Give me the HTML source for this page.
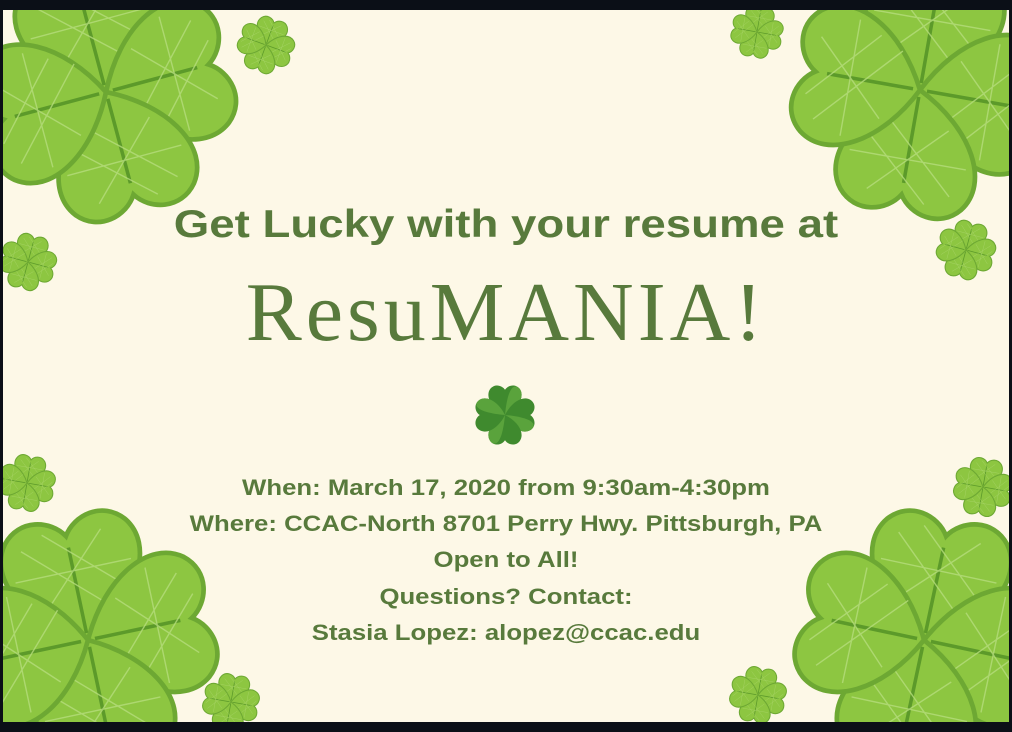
<!DOCTYPE html>
<html><head><style>
html,body{margin:0;padding:0;background:#0b0f17;overflow:hidden;}
#c{position:relative;width:1012px;height:732px;overflow:hidden;background:#0b0f17;}
#p{position:absolute;left:3px;top:10px;width:1006px;height:712px;background:#fdf8e7;overflow:hidden;}
svg{position:absolute;left:-3px;top:-10px;}
.t{position:absolute;left:-3px;width:1012px;text-align:center;color:#587a3c;font-family:"Liberation Sans",sans-serif;white-space:nowrap;}
</style></head><body><div id="c"><div id="p">
<svg width="1012" height="732" viewBox="0 0 1012 732">
<defs>
<g id="lf">
<path d="M0,0 C-50,-25 -72,-68 -52,-94 C-36,-113 -10,-106 0,-90 C10,-106 36,-113 52,-94 C72,-68 50,-25 0,0Z" fill="#8dc641" stroke="#6da833" stroke-width="4"/>
<path d="M0,-6 L0,-80" stroke="#5c9a2a" stroke-width="3" fill="none"/>
<path d="M-40,-85 L30,-20 M-20,-95 L40,-40 M30,-90 L-30,-30 M-50,-60 L50,-60" stroke="#b5dc7c" stroke-width="1.2" fill="none" opacity=".8"/>
</g>
<g id="cl"><use href="#lf"/><use href="#lf" transform="rotate(90)"/><use href="#lf" transform="rotate(180)"/><use href="#lf" transform="rotate(270)"/></g>
<g id="lf2">
<path d="M0,0 C-50,-25 -72,-68 -52,-94 C-36,-113 -10,-106 0,-90 C10,-106 36,-113 52,-94 C72,-68 50,-25 0,0Z" fill="#3f8a2e"/>
<path d="M0,0 C10,-106 36,-113 52,-94 C72,-68 50,-25 0,0Z" fill="#5aa33c"/>
</g>
<g id="cl2"><use href="#lf2"/><use href="#lf2" transform="rotate(90)"/><use href="#lf2" transform="rotate(180)"/><use href="#lf2" transform="rotate(270)"/></g>
</defs>
<g transform="translate(106,92) rotate(-15) scale(1.18)"><use href="#cl"/></g>
<g transform="translate(920,90) rotate(10) scale(1.18)"><use href="#cl"/></g>
<g transform="translate(88,640) rotate(-12) scale(1.18)"><use href="#cl"/></g>
<g transform="translate(924,640) rotate(12) scale(1.18)"><use href="#cl"/></g>
<g transform="translate(266,45) rotate(20) scale(.26)"><use href="#cl"/></g>
<g transform="translate(757,32) rotate(10) scale(.24)"><use href="#cl"/></g>
<g transform="translate(28,262) rotate(15) scale(.26)"><use href="#cl"/></g>
<g transform="translate(966,250) rotate(15) scale(.27)"><use href="#cl"/></g>
<g transform="translate(27,483) rotate(10) scale(.26)"><use href="#cl"/></g>
<g transform="translate(983,487) rotate(10) scale(.27)"><use href="#cl"/></g>
<g transform="translate(231,702) rotate(10) scale(.26)"><use href="#cl"/></g>
<g transform="translate(758,695) rotate(10) scale(.26)"><use href="#cl"/></g>
<g transform="translate(505,415) scale(.28)"><use href="#cl2"/></g>
</svg>
<div class="t" style="top:193px;font-size:39px;font-weight:bold;transform:scaleX(1.17);">Get Lucky with your resume at</div>
<div class="t" style="top:261px;font-size:84px;line-height:84px;font-family:'Liberation Serif',serif;letter-spacing:4px;">ResuMANIA!</div>
<div class="t" style="top:460px;font-size:22px;font-weight:bold;line-height:36.2px;transform:scaleX(1.17);">When: March 17, 2020 from 9:30am-4:30pm<br>Where: CCAC-North 8701 Perry Hwy. Pittsburgh, PA<br>Open to All!<br>Questions? Contact:<br>Stasia Lopez: alopez@ccac.edu</div>
</div></div></body></html>
